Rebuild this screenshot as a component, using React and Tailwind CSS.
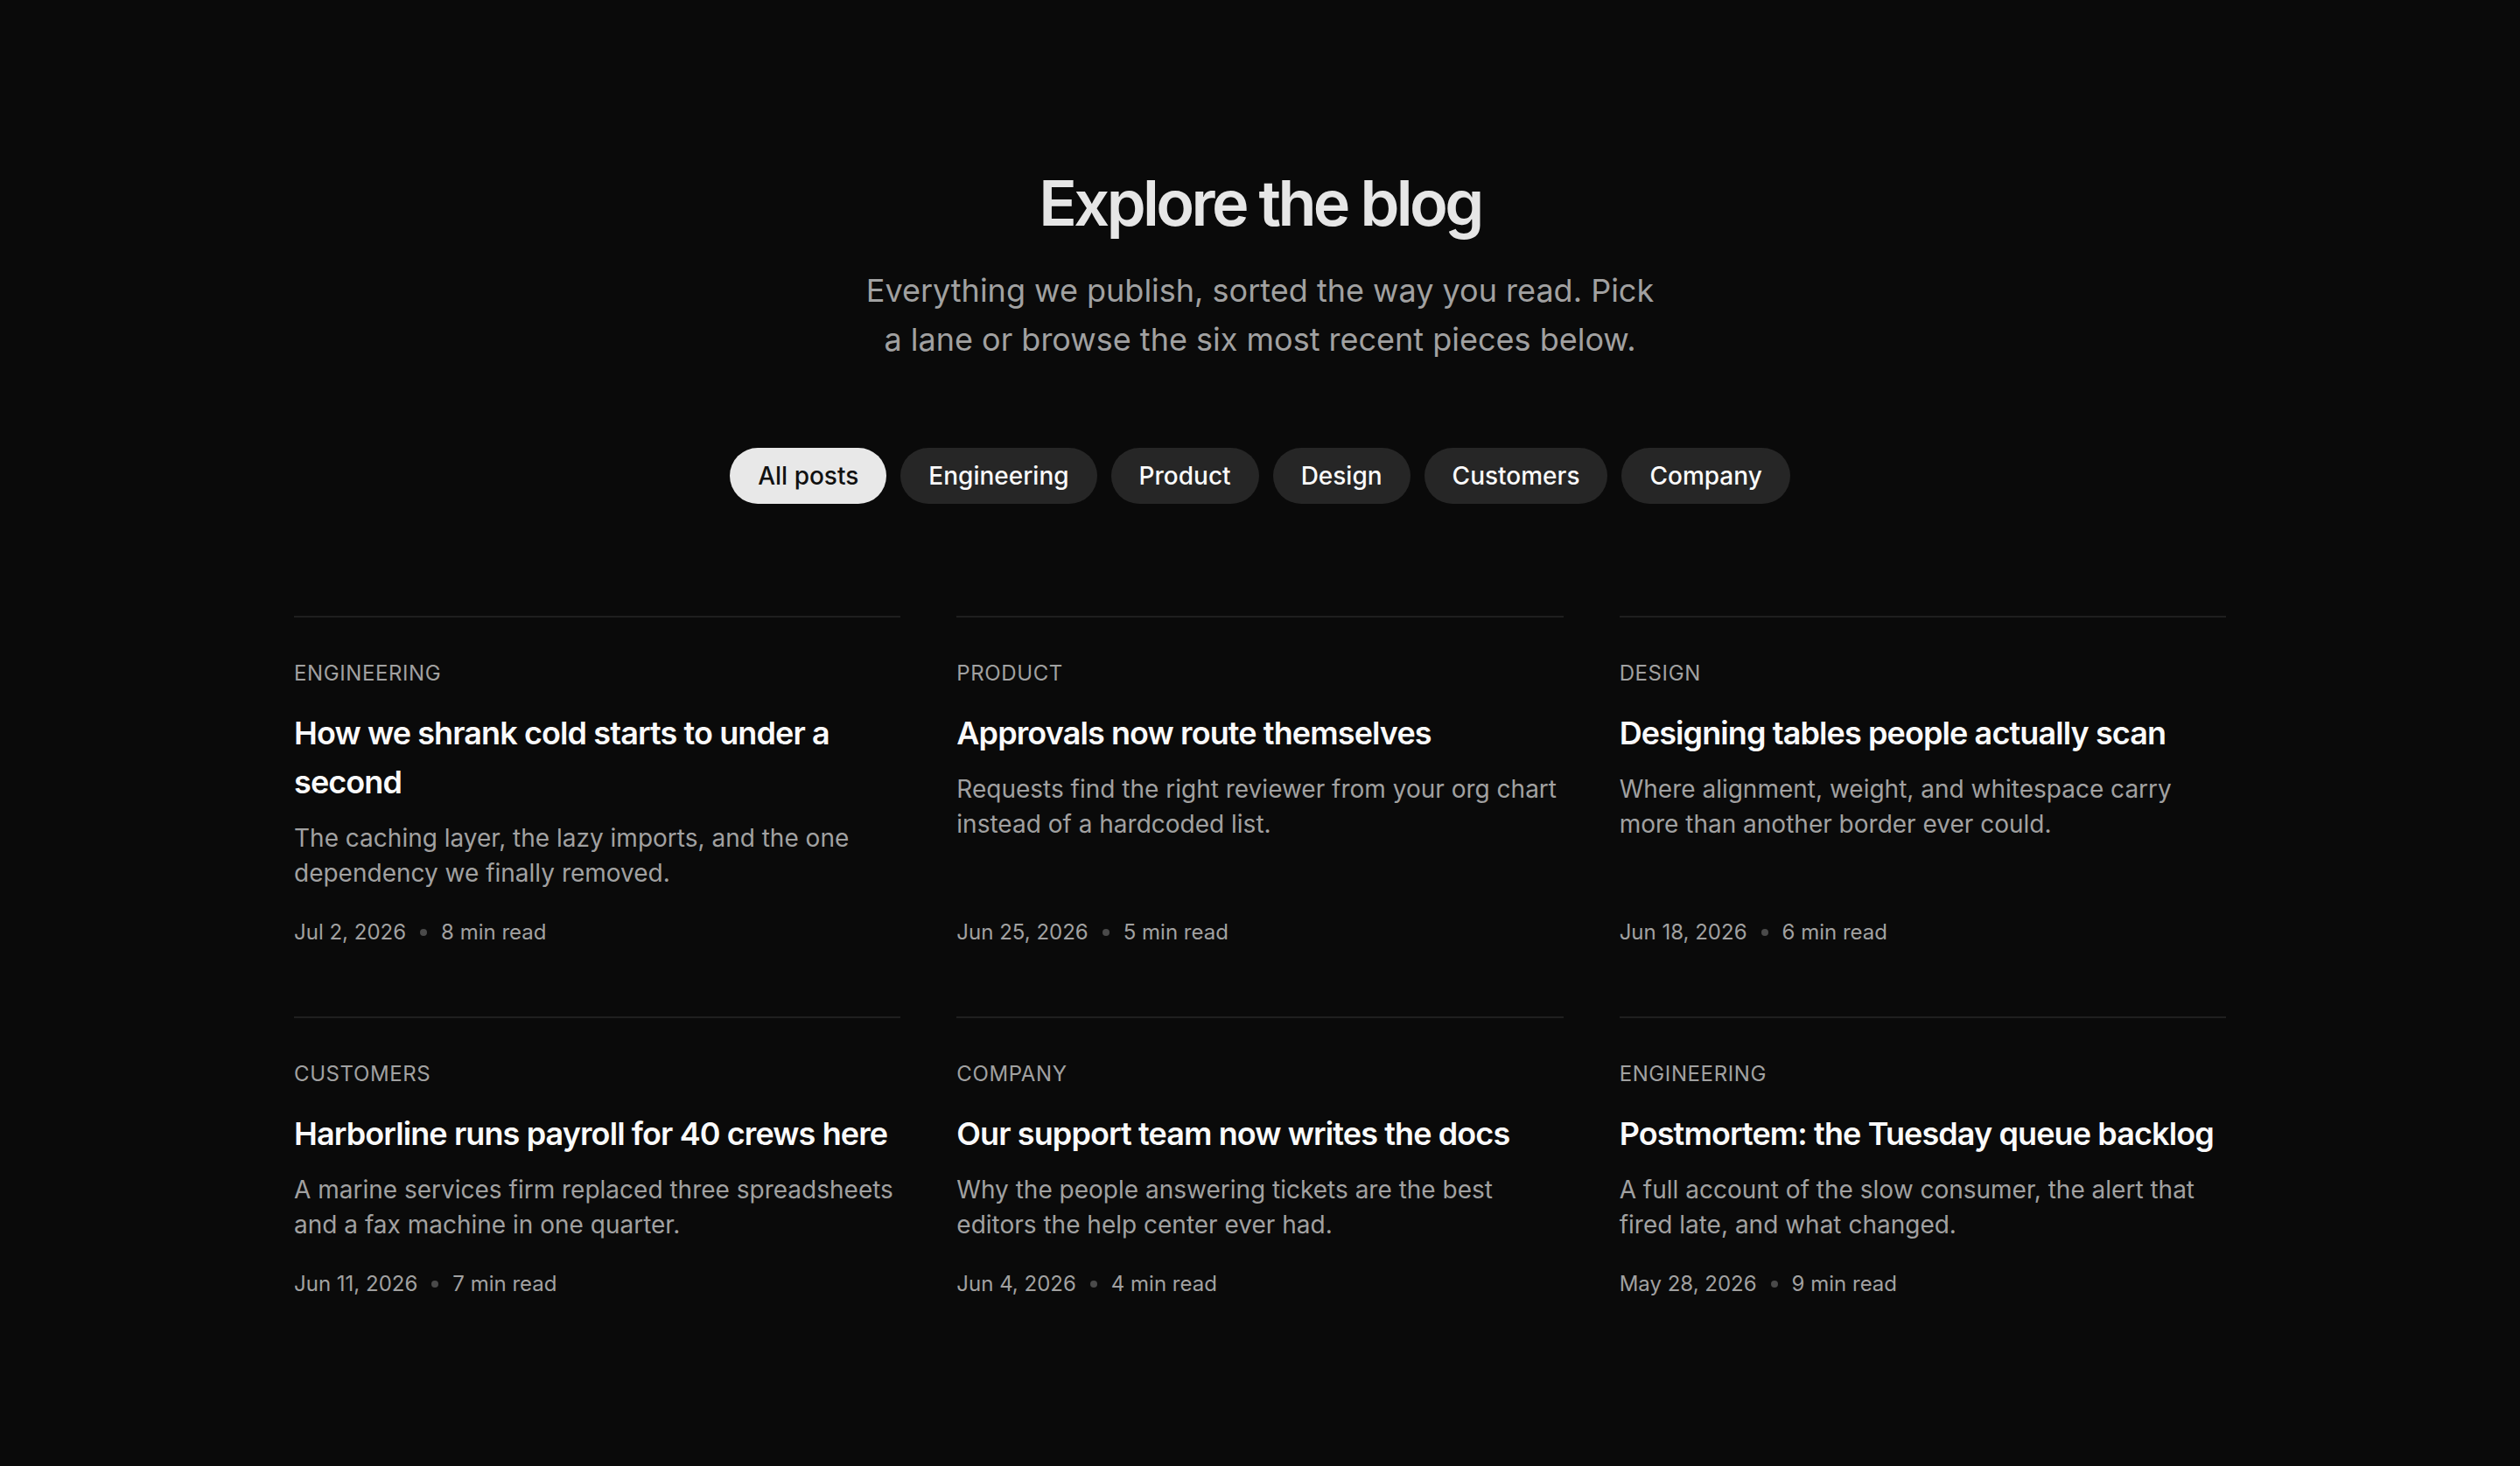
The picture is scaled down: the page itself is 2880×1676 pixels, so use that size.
import { useState } from 'react'

const categories = ['All posts', 'Engineering', 'Product', 'Design', 'Customers', 'Company']

const posts = [
  {
    category: 'Engineering',
    title: 'How we shrank cold starts to under a second',
    excerpt: 'The caching layer, the lazy imports, and the one dependency we finally removed.',
    date: 'Jul 2, 2026',
    read: '8 min read',
  },
  {
    category: 'Product',
    title: 'Approvals now route themselves',
    excerpt: 'Requests find the right reviewer from your org chart instead of a hardcoded list.',
    date: 'Jun 25, 2026',
    read: '5 min read',
  },
  {
    category: 'Design',
    title: 'Designing tables people actually scan',
    excerpt: 'Where alignment, weight, and whitespace carry more than another border ever could.',
    date: 'Jun 18, 2026',
    read: '6 min read',
  },
  {
    category: 'Customers',
    title: 'Harborline runs payroll for 40 crews here',
    excerpt: 'A marine services firm replaced three spreadsheets and a fax machine in one quarter.',
    date: 'Jun 11, 2026',
    read: '7 min read',
  },
  {
    category: 'Company',
    title: 'Our support team now writes the docs',
    excerpt: 'Why the people answering tickets are the best editors the help center ever had.',
    date: 'Jun 4, 2026',
    read: '4 min read',
  },
  {
    category: 'Engineering',
    title: 'Postmortem: the Tuesday queue backlog',
    excerpt: 'A full account of the slow consumer, the alert that fired late, and what changed.',
    date: 'May 28, 2026',
    read: '9 min read',
  },
]

function PostCard({ post }) {
  return (
    <article className="flex flex-col border-t-2 border-[#1f1f1f] pt-12">
      <span className="text-[24px] leading-[32px] uppercase tracking-wide text-[#a1a1a1]">{post.category}</span>
      <h3 className="mt-6 text-[36px] leading-[56px] font-semibold tracking-tight text-[#fafafa]">{post.title}</h3>
      <p className="mt-4 text-[28px] leading-[40px] text-[#a1a1a1]">{post.excerpt}</p>
      <div className="mt-auto flex items-center gap-4 pt-8 text-[24px] leading-[32px] text-[#a1a1a1]">
        <span>{post.date}</span>
        <span className="h-2 w-2 rounded-full bg-[#4a4a4a]" />
        <span>{post.read}</span>
      </div>
    </article>
  )
}

export default function App() {
  const [active, setActive] = useState('All posts')

  return (
    <div className="min-h-screen bg-[#0a0a0a] font-['Inter',sans-serif] antialiased">
      <section className="mx-auto max-w-[2304px] px-12 pt-48 pb-32">
        <header className="flex flex-col items-center text-center">
          <h1 className="text-[72px] leading-[80px] font-semibold tracking-tighter text-[#e6e6e6]">Explore the blog</h1>
          <p className="mt-8 max-w-[920px] text-[36px] leading-[56px] text-[#a1a1a1]">
            Everything we publish, sorted the way you read. Pick a lane or browse the six most recent pieces below.
          </p>
        </header>

        <nav className="mt-24 flex justify-center gap-4">
          {categories.map(cat => (
            <button
              key={cat}
              onClick={() => setActive(cat)}
              className={
                cat === active
                  ? 'rounded-full bg-[#e8e8e8] px-8 py-3 text-[28px] leading-[40px] font-medium text-[#111111] cursor-pointer'
                  : 'rounded-full bg-[#262626] px-8 py-3 text-[28px] leading-[40px] font-medium text-[#fafafa] cursor-pointer'
              }
            >
              {cat}
            </button>
          ))}
        </nav>

        <div className="mt-32 grid grid-cols-3 gap-x-16 gap-y-20">
          {posts.map(post => (
            <PostCard key={post.title} post={post} />
          ))}
        </div>
      </section>
    </div>
  )
}
